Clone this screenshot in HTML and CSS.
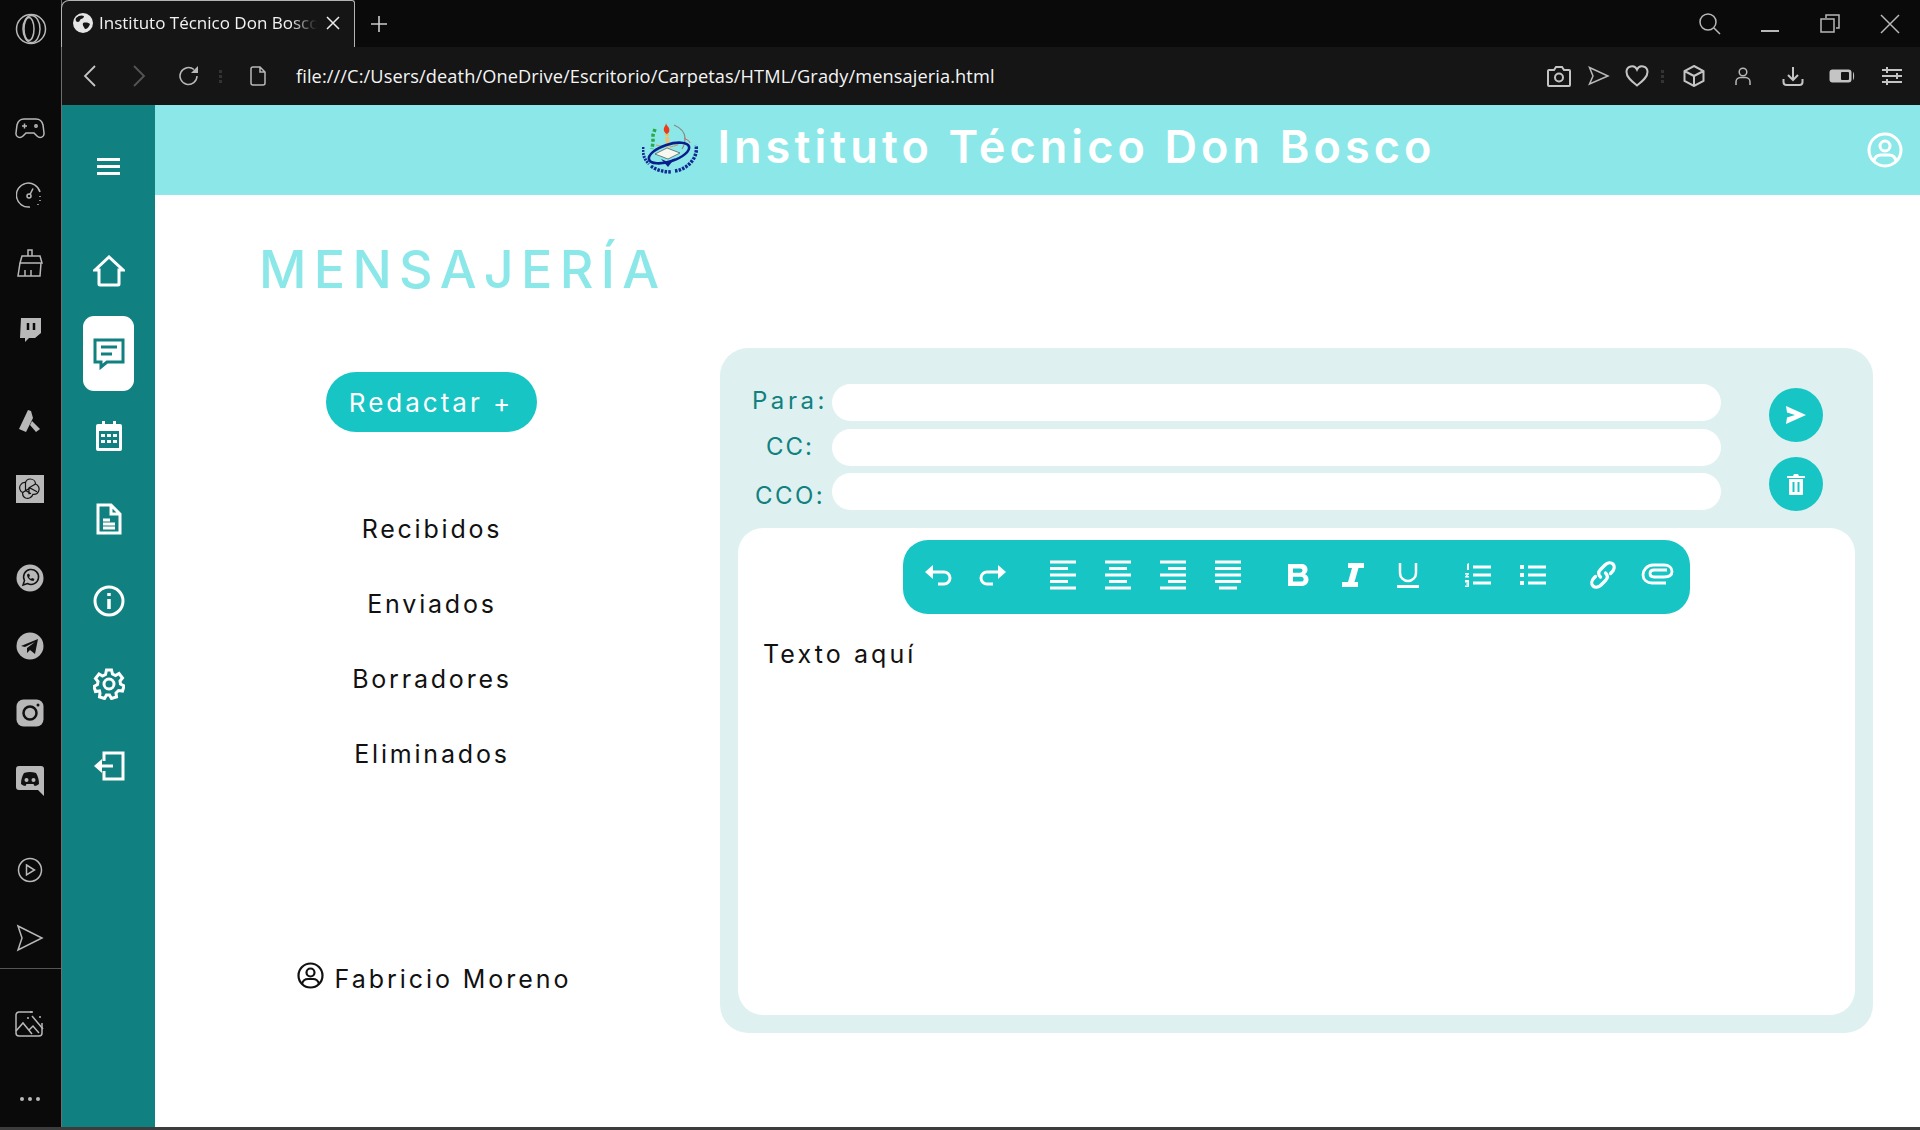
FILE: index.html
```html
<!DOCTYPE html>
<html lang="es">
<head>
<meta charset="utf-8">
<title>Instituto Técnico Don Bosco</title>
<link rel="stylesheet" href="styles.css">
</head>
<body>
<div class="shell">
  <aside class="rail">
    <div class="rail-top">
      <svg width="32" height="32" viewBox="0 0 32 32" class="ln"><circle cx="16" cy="16" r="14.500"/><ellipse cx="16.500" cy="16" rx="8.500" ry="13.500"/><ellipse cx="14" cy="16" rx="5" ry="11.500"/></svg>
    </div>
    <div class="rail-group first">
      <div class="rail-item"><svg width="30" height="22" viewBox="0 0 30 22" class="ln"><path d="M9 2h12c4 0 6 2 7 6l1 8c.5 4-4 6-7 3l-3-3h-8l-3 3c-3 3-7.500 1-7-3l1-8c1-4 3-6 7-6z"/><path d="M7 9h5M9.500 6.500v5"/><circle cx="21" cy="9" r="1.200"/></svg></div>
      <div class="rail-item"><svg width="28" height="28" viewBox="0 0 28 28" class="ln"><path d="M24 11A12 12 0 1 0 14 26"/><circle cx="13" cy="15" r="2"/><path d="M14 13.500l3-6"/><path d="M24 15v1M24 19v1M22 23v1" /></svg></div>
      <div class="rail-item"><svg width="26" height="28" viewBox="0 0 26 28" class="ln"><path d="M11 1h4v6h-4zM5 7h18l2 7H3zM3 14h21l-1 13H1zM8 21v6M14 21v6"/></svg></div>
      <div class="rail-item"><svg width="24" height="26" viewBox="0 0 24 26"><path d="M3 1h20v15l-6 5h-6l-4 4v-4H2z" fill="#b8b8b8"/><path d="M10 6v7M16 6v7" stroke="#0a0a0a" stroke-width="2.500"/></svg></div>
    </div>
    <div class="rail-group second">
      <div class="rail-item"><svg width="24" height="24" viewBox="0 0 24 24"><path d="M10 1l3 1 2 7-7 14-7-3z" fill="#b8b8b8"/><path d="M14 12l8 8-4 3-6-7z" fill="#b8b8b8"/></svg></div>
      <div class="rail-item"><div class="gpt"><svg width="22" height="22" viewBox="0 0 22 22" fill="none" stroke="#111" stroke-width="1.200"><path d="M11 1c3 0 5.500 2 5.500 5 3 1 4.500 4.500 3 7.500-1 2-3 3.200-5.500 2.800-1 3-4.500 5-7.500 3.700-2-1-3.200-3-2.800-5.500C1 13.500-.3 9.500 1.500 7 2.700 5 4.500 4.300 6.500 4.500 7.200 2.500 9 1 11 1z"/><path d="M6.500 4.500v8l5.500 3.200M16.500 6L10 9.800v6.500M3.700 14.500L11 10l7 3.800"/></svg></div></div>
    </div>
    <div class="rail-group third">
      <div class="rail-item"><svg width="28" height="28" viewBox="0 0 28 28"><circle cx="14" cy="14" r="13.500" fill="#b8b8b8"/><path d="M7 21l1.500-4.500a7.500 7.500 0 1 1 3 3z" fill="none" stroke="#111" stroke-width="1.500"/><path d="M11 10.500c0 3.500 3 6.500 6.500 6.500l1-2-2.500-1-1 1c-1-.5-1.500-1-2-2l1-1-1-2.500z" fill="#111"/></svg></div>
      <div class="rail-item"><svg width="28" height="28" viewBox="0 0 28 28"><circle cx="14" cy="14" r="13.500" fill="#b8b8b8"/><path d="M5 14l17-7-3 15-5-4-3 3v-5l8-6-10 5z" fill="#111"/></svg></div>
      <div class="rail-item"><svg width="28" height="28" viewBox="0 0 28 28"><rect x=".5" y=".5" width="27" height="27" rx="7" fill="#b8b8b8"/><circle cx="14" cy="14" r="6.500" fill="none" stroke="#111" stroke-width="2.500"/><circle cx="22" cy="6" r="1.500" fill="#111"/></svg></div>
      <div class="rail-item"><svg width="28" height="30" viewBox="0 0 28 30"><path d="M3 0h22a3 3 0 0 1 3 3v27l-6-6H3a3 3 0 0 1-3-3V3a3 3 0 0 1 3-3z" fill="#b8b8b8"/><path d="M8 7c4-1.500 8-1.500 12 0 2 3 3 7 3 11-1.500 1-3 2-4.500 2l-1-2h-7l-1 2c-1.500 0-3-1-4.500-2 0-4 1-8 3-11z" fill="#111"/><circle cx="10.500" cy="14" r="2" fill="#b8b8b8"/><circle cx="17.500" cy="14" r="2" fill="#b8b8b8"/></svg></div>
    </div>
    <div class="rail-group fourth">
      <div class="rail-item"><svg width="26" height="26" viewBox="0 0 26 26" class="ln"><circle cx="13" cy="13" r="11.500"/><path d="M9.500 8l8 5-8 5z"/></svg></div>
      <div class="rail-item"><svg width="28" height="28" viewBox="0 0 28 28" class="ln"><path d="M2 2l24 12L2 26l4-12z"/></svg></div>
    </div>
    <div class="rail-sep"></div>
    <div class="rail-item image-item"><svg width="30" height="28" viewBox="0 0 30 28" class="ln"><path d="M18 2H4a3 3 0 0 0-3 3v18a3 3 0 0 0 3 3h20a3 3 0 0 0 3-3V13"/><path d="M1 21l7-8 9 11M14 20l4-4 6 7"/><path d="M17 6l11 13"/><path d="M16 1v2M25 6v2M12 8h2"/></svg></div>
    <div class="rail-dots"><span></span><span></span><span></span></div>
  </aside>

  <div class="window">
    <div class="tabbar">
      <div class="tab">
        <svg width="20" height="20" viewBox="0 0 20 20"><circle cx="10" cy="10" r="10" fill="#e6e6e6"/><path d="M3 5c3-3 6-3 8-2 0 2-2 3-3 3s-1 3-3 3-3-2-2-4zM10 10c3-1 6 0 7 1-1 3-3 5-5 5-1-2-3-4-2-6z" fill="#161616"/></svg>
        <span class="tab-title">Instituto Técnico Don Bosco</span>
        <svg width="16" height="16" viewBox="0 0 16 16" class="tab-x"><path d="M2 2l12 12M14 2L2 14" stroke="#eee" stroke-width="1.500"/></svg>
      </div>
      <svg class="plus" width="20" height="20" viewBox="0 0 20 20"><path d="M10 2v16M2 10h16" stroke="#ccc" stroke-width="1.600"/></svg>
      <div class="win-controls">
        <svg width="24" height="24" viewBox="0 0 24 24" class="ln"><circle cx="10" cy="10" r="8"/><path d="M16 16l6 6"/></svg>
        <svg width="24" height="24" viewBox="0 0 24 24" class="ln"><path d="M3 19h18" stroke-width="2"/></svg>
        <svg width="24" height="24" viewBox="0 0 24 24" class="ln"><path d="M8 6V3h13v13h-3"/><rect x="3" y="7" width="13" height="13"/></svg>
        <svg width="24" height="24" viewBox="0 0 24 24" class="ln"><path d="M3 3l18 18M21 3L3 21"/></svg>
      </div>
    </div>

    <div class="addressbar">
      <svg width="16" height="24" viewBox="0 0 16 24" fill="none" stroke="#c4c4c4" stroke-width="1.800"><path d="M13 2L3 12l10 10"/></svg>
      <svg width="16" height="24" viewBox="0 0 16 24" fill="none" stroke="#555" stroke-width="1.800"><path d="M3 2l10 10L3 22"/></svg>
      <svg width="22" height="22" viewBox="0 0 22 22" class="ln"><path d="M19 11a8.500 8.500 0 1 1-3-6.500"/><path d="M20 1v7h-7z" fill="#b8b8b8" stroke="none"/></svg>
      <div class="bar-dots"><i></i><i></i><i></i></div>
      <svg width="16" height="20" viewBox="0 0 16 20" class="ln"><path d="M3 1h7l5 5v11a2 2 0 0 1-2 2H3a2 2 0 0 1-2-2V3a2 2 0 0 1 2-2zM10 1v5h5"/></svg>
      <span class="url">file:///C:/Users/death/OneDrive/Escritorio/Carpetas/HTML/Grady/mensajeria.html</span>
      <div class="addr-right">
        <svg width="24" height="22" viewBox="0 0 24 22" class="ln lt"><path d="M2 5h5l2-3h6l2 3h5a1 1 0 0 1 1 1v14a1 1 0 0 1-1 1H2a1 1 0 0 1-1-1V6a1 1 0 0 1 1-1z"/><circle cx="12" cy="12.500" r="4"/></svg>
        <svg width="22" height="20" viewBox="0 0 22 20" class="ln"><path d="M1.500 1.500L20 10 1.500 18l3.500-8z"/></svg>
        <svg width="24" height="22" viewBox="0 0 24 22" class="ln lt"><path d="M12 20.500C5 15 1.500 11.500 1.500 7A5.500 5.500 0 0 1 12 4.500 5.500 5.500 0 0 1 22.500 7c0 4.500-3.500 8-10.500 13.500z"/></svg>
        <div class="bar-dots"><i></i><i></i><i></i></div>
        <svg width="22" height="22" viewBox="0 0 22 22" class="ln lt"><path d="M11 1l9.500 5v10L11 21l-9.500-5V6zM1.500 6L11 11l9.500-5M11 11v10"/></svg>
        <svg width="18" height="20" viewBox="0 0 18 20" class="ln"><circle cx="9" cy="6" r="3.800"/><path d="M2 19v-3c0-2.500 2-4.500 4.500-4.500h5c2.500 0 4.500 2 4.500 4.500v3"/></svg>
        <svg width="22" height="20" viewBox="0 0 22 20" class="ln lt"><path d="M11 1v12M6 9l5 5 5-5M1.500 13v3a3 3 0 0 0 3 3h13a3 3 0 0 0 3-3v-3"/></svg>
        <svg width="26" height="14" viewBox="0 0 26 14"><rect x=".5" y=".5" width="22" height="13" rx="3" fill="#c4c4c4"/><rect x="12" y="3" width="8" height="8" rx="1" fill="#151515"/><path d="M24 3c1.500 1 1.500 7 0 8z" fill="#c4c4c4"/></svg>
        <svg width="22" height="20" viewBox="0 0 22 20" class="ln lt"><path d="M1 4h20M1 10h20M1 16h20M6 1v6M16 7v6M6 13v6"/></svg>
      </div>
    </div>

    <div class="page">
      <nav class="nav">
        <div class="burger"><span></span><span></span><span></span></div>
        <div class="nav-list">
          <div class="nav-item"><svg width="32" height="32" viewBox="0 0 32 32" class="wl"><path d="M2 15L16 2l14 13h-4v14a1 1 0 0 1-1 1H7a1 1 0 0 1-1-1V15z"/></svg></div>
          <div class="nav-item active"><svg width="32" height="32" viewBox="0 0 32 32" class="tl"><path d="M2 2h28v22H14l-6 5v-5H2z"/><path d="M8 9h16M8 16h11"/></svg></div>
          <div class="nav-item"><svg width="28" height="32" viewBox="0 0 28 32"><path d="M3 4h4V1h3v3h8V1h3v3h4a2 2 0 0 1 2 2v23a2 2 0 0 1-2 2H3a2 2 0 0 1-2-2V6a2 2 0 0 1 2-2z" fill="#fff"/><rect x="4" y="11" width="20" height="17" fill="#108080"/><path d="M6 14h4v3H6zM12 14h4v3h-4zM18 14h4v3h-4zM6 20h4v3H6zM12 20h4v3h-4zM18 20h4v3h-4z" fill="#fff"/></svg></div>
          <div class="nav-item"><svg width="26" height="32" viewBox="0 0 26 32" class="wl"><path d="M2 2h13l9 9v19H2zM15 2v9h9"/><path d="M7 17h7M7 21h12M7 25h12"/></svg></div>
          <div class="nav-item"><svg width="32" height="32" viewBox="0 0 32 32" class="wl"><circle cx="16" cy="16" r="14"/><path d="M16 14v10" stroke-width="3.500"/><path d="M16 8v3" stroke-width="3.500"/></svg></div>
          <div class="nav-item"><svg width="32" height="32" viewBox="0 0 32 32" class="wl"><circle cx="16" cy="16" r="5"/><path d="M13.500 2h5l1 4 3 1.500 3.500-2 3.500 4.500-2.500 3 .5 3 3.500 2-1.500 5-4-.5-2.500 2.500.5 4-5 1.500-2-3.500h-3l-2 3.500-5-1.500.5-4L6.500 23l-4 .5L1 18.500l3.500-2 .5-3-2.500-3L6 6l3.500 2 3-1.500z"/></svg></div>
          <div class="nav-item"><svg width="32" height="30" viewBox="0 0 32 30" class="wl"><path d="M11 10V2h19v26H11v-8"/><path d="M20 15H7"/><path d="M1 15l8-7v14z" fill="#fff" stroke="none"/></svg></div>
        </div>
      </nav>

      <div class="content">
        <header class="topbar">
          <span></span>
          <div class="brand">
            <svg width="56" height="56" viewBox="0 0 56 56" class="logo">
              <path d="M32 3c7 3 11 8 11 13 0 4-1 8-3 11" fill="none" stroke="#8a8a8a" stroke-width="1.200"/>
              <path d="M42 16l5 3 1 2" fill="none" stroke="#c86a5a" stroke-width="1"/>
              <path d="M13 7l-2 6 0 7-1 7" fill="none" stroke="#2aa84a" stroke-width="3.500" stroke-dasharray="3 2"/>
              <path d="M24 1c0 3-3 4-2 8 1 2 2 3 3 3 2-1 3-3 2-6-1-2-3-3-3-5z" fill="#ee3a1a"/>
              <path d="M22 12h5l-1 3z" fill="#f2c14a"/>
              <path d="M23 15h4l1 10h-4z" fill="#e9c27a"/>
              <path d="M14 23l8 2M36 23l-8 2" stroke="#c9a060" stroke-width="1.200"/>
              <ellipse cx="27" cy="31" rx="21" ry="8.500" transform="rotate(-18 27 31)" fill="none" stroke="#0b1f8c" stroke-width="2.600"/>
              <path d="M13 32l12-6 13 5-12 6z" fill="#f8f8f0" stroke="#333" stroke-width=".6"/>
              <path d="M19 37l7 8 7-9-7 4z" fill="#0b1f8c"/>
              <path d="M1 25c-.5 7 1 12 6 17" fill="none" stroke="#102a94" stroke-width="3" stroke-dasharray="2 1"/>
              <path d="M9 44c5 4 13 6 21 6" fill="none" stroke="#102a94" stroke-width="3.500" stroke-dasharray="2.500 1.200"/>
              <path d="M33 49c8-1 15-6 19-13 2-4 3-8 2-13" fill="none" stroke="#102a94" stroke-width="3.500" stroke-dasharray="2.500 1.200"/>
            </svg>
            <span class="brand-name">Instituto Técnico Don Bosco</span>
          </div>
          <svg width="36" height="36" viewBox="0 0 36 36" class="profile wl"><circle cx="18" cy="18" r="16"/><circle cx="18" cy="14" r="5"/><path d="M7 29c1-5 5-6 7-6h8c2 0 6 1 7 6"/></svg>
        </header>

        <main class="body">
          <h1 class="title">MENSAJERÍA</h1>
          <div class="columns">
            <section class="folders">
              <button class="compose">Redactar +</button>
              <ul class="folder-list">
                <li>Recibidos</li>
                <li>Enviados</li>
                <li>Borradores</li>
                <li>Eliminados</li>
              </ul>
              <div class="user">
                <svg width="27" height="27" viewBox="0 0 27 27" fill="none" stroke="#111" stroke-width="2.200"><circle cx="13.500" cy="13.500" r="12"/><circle cx="13.500" cy="10.500" r="4"/><path d="M5 22c1-4 4-5 6-5h5c2 0 5 1 6 5"/></svg>
                <span>Fabricio Moreno</span>
              </div>
            </section>

            <section class="panel">
              <div class="fields-row">
                <div class="fields">
                  <label class="f-label para">Para:</label><div class="f-input"></div>
                  <label class="f-label cc">CC:</label><div class="f-input"></div>
                  <label class="f-label cco">CCO:</label><div class="f-input"></div>
                </div>
                <div class="actions">
                  <button class="circle"><svg width="22" height="20" viewBox="0 0 22 20"><path d="M1 1l20 9-20 9 1-6.500 8-2.500-8-2.500z" fill="#fff"/></svg></button>
                  <button class="circle"><svg width="20" height="22" viewBox="0 0 20 22"><path d="M1 3h6l1-2h4l1 2h6v2H1zM3 6h14v15a1 1 0 0 1-1 1H4a1 1 0 0 1-1-1z" fill="#fff"/><path d="M7.500 9v10M12.500 9v10" stroke="#17c5c5" stroke-width="2"/></svg></button>
                </div>
              </div>
              <div class="editor">
                <div class="toolbar">
                  <div class="tgroup">
                    <div class="tool"><svg width="28" height="22" viewBox="0 0 28 22"><path d="M1 8l8-7v14z" fill="#fff"/><path d="M8 8h12a6 6 0 0 1 0 12h-6" fill="none" stroke="#fff" stroke-width="3"/></svg></div>
                    <div class="tool"><svg width="28" height="22" viewBox="0 0 28 22"><path d="M27 8l-8-7v14z" fill="#fff"/><path d="M20 8H8a6 6 0 0 0 0 12h6" fill="none" stroke="#fff" stroke-width="3"/></svg></div>
                  </div>
                  <div class="tgroup">
                    <div class="tool"><svg width="26" height="30" viewBox="0 0 26 30" class="bars"><path d="M0 2h26M0 8.500h18M0 15h26M0 21.500h18M0 28h26"/></svg></div>
                    <div class="tool"><svg width="26" height="30" viewBox="0 0 26 30" class="bars"><path d="M0 2h26M4 8.500h18M0 15h26M4 21.500h18M0 28h26"/></svg></div>
                    <div class="tool"><svg width="26" height="30" viewBox="0 0 26 30" class="bars"><path d="M0 2h26M8 8.500h18M0 15h26M8 21.500h18M0 28h26"/></svg></div>
                    <div class="tool"><svg width="26" height="30" viewBox="0 0 26 30" class="bars"><path d="M0 2h26M0 8.500h26M0 15h26M0 21.500h26M4 28h18"/></svg></div>
                  </div>
                  <div class="tgroup">
                    <div class="tool"><svg width="22" height="24" viewBox="0 0 22 24"><path fill-rule="evenodd" d="M1 1h13c4 0 6.500 2 6.500 5.500 0 2-1 3.800-2.500 4.700 2.200.8 3.500 2.800 3.500 5.300 0 4-3 6.500-7 6.500H1zM6 5.500v4.200h7c1.500 0 2.500-.9 2.500-2.100S14.500 5.500 13 5.500zM6 13.800v4.700h8c1.700 0 2.700-1 2.700-2.350S15.700 13.800 14 13.800z" fill="#fff"/></svg></div>
                    <div class="tool"><svg width="24" height="26" viewBox="0 0 24 26"><path d="M7 1h16v5h-5.500l-4 14H17v5H1v-5h6l4-14H7z" fill="#fff"/></svg></div>
                    <div class="tool"><svg width="24" height="26" viewBox="0 0 24 26"><path d="M4 1v10a8 8 0 0 0 16 0V1" fill="none" stroke="#fff" stroke-width="2.500"/><path d="M1 23h22v3H1z" fill="#fff"/></svg></div>
                  </div>
                  <div class="tgroup">
                    <div class="tool"><svg width="26" height="24" viewBox="0 0 26 24"><path d="M8 4h18M8 12h18M8 20h18" stroke="#fff" stroke-width="3"/><path d="M2 1l2-1v7H2zM0 10h4v1.500L2 13h2v1.500H0v-1l2-2H0zM0 17h4v7H0v-1.500h2.500v-1H1v-1h1.500v-1H0z" fill="#fff"/></svg></div>
                    <div class="tool"><svg width="26" height="24" viewBox="0 0 26 24"><path d="M8 4h18M8 12h18M8 20h18" stroke="#fff" stroke-width="3"/><path d="M0 2h4v4H0zM0 10h4v4H0zM0 18h4v4H0z" fill="#fff"/></svg></div>
                  </div>
                  <div class="tgroup">
                    <div class="tool"><svg width="30" height="30" viewBox="0 0 30 30" fill="none" stroke="#fff" stroke-width="3.200" stroke-linecap="round"><path d="M12.500 17c-2.500-2.500-2.500-5 0-7.500l4.500-4.500c2.500-2.500 6-3 8-1s1.500 5.500-1 8l-1.500 1.500"/><path d="M17.500 13c2.500 2.500 2.500 5 0 7.500L13 25c-2.500 2.500-6 3-8 1s-1.500-5.500 1-8l1.500-1.500"/></svg></div>
                    <div class="tool"><svg width="33" height="26" viewBox="0 0 33 26" fill="none" stroke="#fff" stroke-width="2.800"><path d="M25 21H11C6 21 2 17.500 2 13S6 3 12 3h11c5 0 8 2.500 8 6.500S28 15 23 15H13c-2.500 0-4-1.500-4-3.500S10.500 8 13 8h13"/></svg></div>
                  </div>
                </div>
                <p class="draft">Texto aquí</p>
              </div>
            </section>
          </div>
        </main>
      </div>
    </div>
  </div>
</div>
</body>
</html>
```
FILE: styles.css
```css
* { box-sizing: border-box; }
html, body { margin: 0; padding: 0; height: 100%; }
body { background: #3c3c3c; font-family: "Inter", "Liberation Sans", sans-serif; overflow: hidden; }
button { border: 0; font: inherit; padding: 0; }
svg { display: block; flex: none; }
.ln { fill: none; stroke: #b8b8b8; stroke-width: 1.500; }
.lt { stroke: #c4c4c4; stroke-width: 2; }
.wl { fill: none; stroke: #fff; stroke-width: 3; }
.tl { fill: none; stroke: #108080; stroke-width: 3; }

.shell { display: flex; width: 1920px; height: 1127px; }

/* browser side rail */
.rail { width: 62px; flex: none; background: #0a0a0a; border-right: 1px solid #6e6e6e; display: flex; flex-direction: column; }
.rail-top { height: 58px; display: flex; align-items: center; justify-content: center; }
.rail-group { display: flex; flex-direction: column; }
.rail-group.first { margin-top: 36px; }
.rail-group.second { margin-top: 23.500px; }
.rail-group.third { margin-top: 22px; }
.rail-group.fourth { margin-top: 22px; }
.rail-item { height: 67.500px; display: flex; align-items: center; justify-content: center; }
.rail-item svg { margin-right: 2px; }
.gpt { width: 28px; height: 28px; margin-right: 2px; background: #b8b8b8; display: flex; align-items: center; justify-content: center; }
.gpt svg { margin: 0; }
.rail-sep { height: 1px; background: #555; margin-top: -4px; }
.image-item { margin-top: 22px; }
.rail-dots { display: flex; gap: 4px; justify-content: center; margin-top: 39px; padding-right: 2px; }
.rail-dots span { width: 4px; height: 4px; border-radius: 50%; background: #b8b8b8; }

/* browser chrome */
.window { flex: 1; display: flex; flex-direction: column; min-width: 0; }
.tabbar { height: 47px; flex: none; display: flex; align-items: center; background: #0a0a0a; }
.tab { width: 294px; height: 47px; margin-left: -1px; background: #151515; border: 1px solid #b4b4b4; border-bottom: 0; border-top-left-radius: 8px; border-top-right-radius: 3px; display: flex; align-items: center; padding: 0 13px 2px 11px; }
.tab-title { flex: 1; min-width: 0; overflow: hidden; white-space: nowrap; margin-left: 6px; font: 400 17px/22px "Open Sans", sans-serif; color: #f2f2f2; -webkit-mask-image: linear-gradient(to right, #000 88%, transparent 100%); mask-image: linear-gradient(to right, #000 88%, transparent 100%); }
.tab-x { margin-left: 8px; }
.plus { margin-left: 14px; }
.win-controls { margin-left: auto; display: grid; grid-template-columns: 61px 60px 60px 60px; justify-items: center; }
.addressbar { height: 58px; flex: none; background: #151515; display: grid; grid-template-columns: 56px 42px 58px 4px 72px 1fr auto; align-items: center; justify-items: center; }
.url { justify-self: start; margin-left: 2px; color: #f4f4f4; font: 400 18.200px/24px "Open Sans", sans-serif; letter-spacing: .1px; white-space: nowrap; }
.bar-dots { display: flex; flex-direction: column; gap: 2px; }
.bar-dots i { width: 3px; height: 3px; background: #333; display: block; }
.addr-right { justify-self: end; display: grid; grid-template-columns: 40px 40px 36px 14px 50px 48px 52px 46px 54px; justify-items: center; align-items: center; padding-right: 1px; }

/* page */
.page { flex: 1; display: flex; min-height: 0; background: #fff; }
.nav { width: 93px; flex: none; background: #108080; display: flex; flex-direction: column; align-items: center; padding-top: 53px; }
.burger { display: flex; flex-direction: column; gap: 4px; }
.burger span { width: 23px; height: 3px; background: #fff; display: block; }
.nav-list { margin-top: 58.500px; display: flex; flex-direction: column; gap: 7.500px; }
.nav-item { width: 51px; height: 75px; display: flex; align-items: center; justify-content: center; border-radius: 11px; }
.nav-item.active { background: #fff; }

.content { flex: 1; display: flex; flex-direction: column; min-width: 0; }
.topbar { height: 90px; flex: none; background: #8ce8e8; display: grid; grid-template-columns: 1fr auto 1fr; align-items: center; padding-left: 3px; }
.brand { display: flex; align-items: center; gap: 19px; }
.brand-name { color: #fff; font-weight: 600; font-size: 45px; line-height: 54px; letter-spacing: 4.100px; white-space: nowrap; margin-bottom: 7px; }
.profile { justify-self: end; margin-right: 17px; }

.body { flex: 1; min-height: 0; }
.title { margin: 0; padding: 47px 0 0 104px; color: #8ce8e8; font-weight: 500; font-size: 52px; line-height: 55px; letter-spacing: 7.300px; height: 153px; }
.columns { display: flex; align-items: flex-start; }

.folders { width: 554px; flex: none; display: flex; flex-direction: column; align-items: center; padding-top: 24px; }
.compose { width: 211px; height: 60px; margin-right: 2px; border-radius: 30px; background: #17c5c5; color: #fff; font-size: 26px; letter-spacing: 3px; font-weight: 400; }
.folder-list { list-style: none; margin: 82px 0 0; padding: 0; display: flex; flex-direction: column; gap: 45px; text-align: center; }
.folder-list li { height: 30px; font-size: 25px; line-height: 30px; letter-spacing: 2.800px; color: #111; }
.user { display: flex; align-items: center; gap: 11px; margin-top: 193px; color: #111; font-size: 25px; line-height: 30px; letter-spacing: 2.950px; margin-left: 4px; }
.user svg { margin-bottom: 6px; }

.panel { width: 1153px; margin-left: 11px; height: 685px; border-radius: 28px; background: #def1f0; padding: 36px 18px 18px; display: flex; flex-direction: column; }
.fields-row { height: 144px; flex: none; display: flex; align-items: flex-start; padding-left: 10px; }
.fields { display: grid; grid-template-columns: 84px 889px; row-gap: 7.500px; align-items: center; }
.f-label { text-align: center; color: #108080; font-size: 24px; line-height: 28px; letter-spacing: 2.400px; white-space: nowrap; }
.f-label.para { padding-bottom: 4px; letter-spacing: 3.600px; }
.f-label.cc { letter-spacing: 2px; }
.f-label.cco { padding-top: 8px; }
.f-input { height: 37px; border-radius: 19px; background: #fff; }
.actions { margin-left: 48px; padding-top: 4px; display: flex; flex-direction: column; gap: 15px; }
.circle { width: 54px; height: 54px; border-radius: 50%; background: #17c5c5; display: flex; align-items: center; justify-content: center; }

.editor { flex: 1; background: #fff; border-radius: 25px; padding: 12px 25px 0; display: flex; flex-direction: column; }
.toolbar { align-self: center; width: 787px; height: 74px; flex: none; border-radius: 25px; background: #17c5c5; display: flex; justify-content: center; gap: 15px; align-items: center; padding: 0 0 5px 2px; }
.tgroup { display: flex; }
.tool { width: 55px; display: flex; justify-content: center; align-items: center; }
.bars { fill: none; stroke: #fff; stroke-width: 3; }
.draft { margin: 25px 0 0; color: #111; font-size: 25px; line-height: 30px; letter-spacing: 3.100px; }
```
